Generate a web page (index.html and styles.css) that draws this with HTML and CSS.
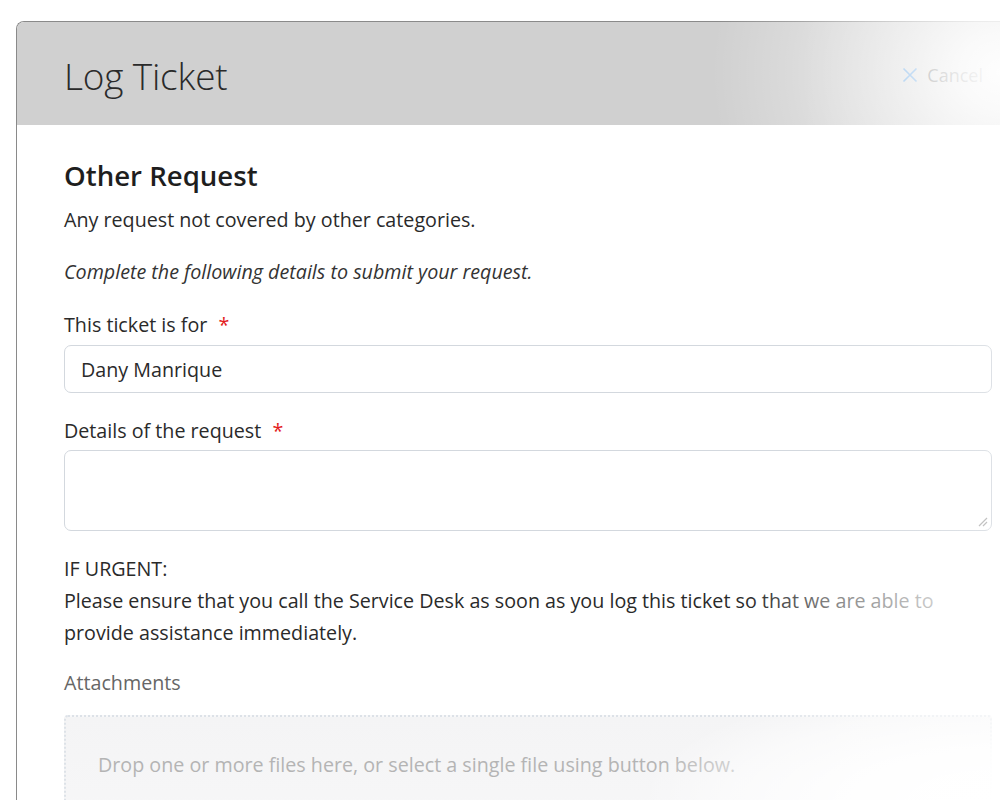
FILE: index.html
```html
<!DOCTYPE html>
<html lang="en">
<head>
<meta charset="utf-8">
<title>Log Ticket</title>
<link rel="stylesheet" href="styles.css">
</head>
<body>
<div class="page">
  <div class="modal">
    <div class="modal-header">
      <h1 class="modal-title">Log Ticket</h1>
      <button class="cancel" type="button">
        <svg class="cancel-icon" width="16" height="16" viewBox="0 0 16 16"><path d="M1.5 1.5 L14.5 14.5 M14.5 1.5 L1.5 14.5" stroke="currentColor" stroke-width="1.6" fill="none"/></svg>
        <span>Cancel</span>
      </button>
    </div>
    <div class="modal-body">
      <h2 class="req-title">Other Request</h2>
      <p class="req-desc">Any request not covered by other categories.</p>
      <p class="req-hint">Complete the following details to submit your request.</p>
      <div class="field">
        <label class="label">This ticket is for <span class="req">*</span></label>
        <div class="input">Dany Manrique</div>
      </div>
      <div class="field">
        <label class="label">Details of the request <span class="req">*</span></label>
        <div class="textarea">
          <svg class="grip" width="12" height="12" viewBox="0 0 12 12"><path d="M11 3 L3 11 M11 7 L7 11" stroke="#b0b0b0" stroke-width="1.2"/></svg>
        </div>
      </div>
      <p class="urgent">IF URGENT:<br>Please ensure that you call the Service Desk as soon as you log this ticket so that we are able to provide assistance immediately.</p>
      <div class="attach">
        <div class="attach-label">Attachments</div>
        <div class="dropzone">Drop one or more files here, or select a single file using button below.</div>
      </div>
    </div>
  </div>
  <div class="fade"></div>
</div>
</body>
</html>
```
FILE: styles.css
```css
html, body {
  margin: 0;
  padding: 0;
  background: #fff;
  overflow: hidden;
}
body {
  font-family: "Open Sans", "Noto Sans", sans-serif;
  color: #252525;
}
.page {
  position: relative;
  width: 1000px;
  height: 800px;
  padding: 21px 0 0 16px;
  box-sizing: border-box;
  overflow: hidden;
}
.modal {
  border-left: 1px solid #8a8a8a;
  border-top: 1px solid #8a8a8a;
  border-top-left-radius: 8px;
  width: 1100px;
  height: 900px;
  background: #fff;
  overflow: hidden;
}
.modal-header {
  background: #d0d0d0;
  height: 103px;
  display: flex;
  align-items: center;
  padding: 0 0 0 47px;
  width: 937px;
  box-sizing: content-box;
}
.modal-title {
  margin: 0;
  font-weight: 300;
  font-size: 37px;
  color: #2a2a2a;
  flex: 1;
  letter-spacing: -0.2px;
  position: relative;
  top: 2px;
}
.cancel {
  display: flex;
  align-items: center;
  gap: 9px;
  border: 0;
  background: none;
  font-family: inherit;
  font-size: 18px;
  color: #333;
  padding: 0;
  margin-right: 18px;
  position: relative;
  top: 1px;
}
.cancel-icon {
  color: #2f86db;
}
.modal-body {
  padding: 30px 0 0 47px;
  width: 928px;
}
.req-title {
  margin: 0;
  font-size: 27.6px;
  font-weight: 600;
  color: #1e1e1e;
  line-height: 40px;
}
.req-desc {
  margin: 11px 0 0;
  font-size: 19.7px;
  line-height: 28px;
  color: #2a2a2a;
}
.req-hint {
  margin: 24px 0 0;
  font-size: 19.7px;
  line-height: 28px;
  font-style: italic;
  color: #333;
}
.field {
  margin-top: 25px;
}
.label {
  display: block;
  font-size: 19.7px;
  line-height: 28px;
  color: #2a2a2a;
}
.req {
  color: #e31b1b;
  margin-left: 6px;
}
.input {
  margin-top: 6px;
  height: 46px;
  border: 1px solid #d3d8de;
  border-radius: 7px;
  padding: 0 16px;
  display: flex;
  align-items: center;
  font-size: 19.7px;
  color: #2a2a2a;
}
.field + .field {
  margin-top: 24px;
}
.textarea {
  margin-top: 5px;
  height: 79px;
  border: 1px solid #d3d8de;
  border-radius: 7px;
  display: flex;
  justify-content: flex-end;
  align-items: flex-end;
}
.grip {
  margin: 0 3px 3px 0;
}
.urgent {
  margin: 22px 0 0;
  font-size: 19.7px;
  line-height: 32px;
  color: #2a2a2a;
}
.attach {
  margin-top: 20px;
}
.attach-label {
  font-size: 19.7px;
  line-height: 28px;
  color: #666;
}
.dropzone {
  margin-top: 18px;
  border: 2px dotted #dde2e8;
  border-radius: 4px;
  background: linear-gradient(to bottom, #f4f4f5, #f8f8f9);
  height: 120px;
  padding: 34px 32px 0;
  font-size: 19.7px;
  color: #b4b4b4;
}
.fade {
  position: absolute;
  inset: 0;
  pointer-events: none;
  background:
    radial-gradient(ellipse 380px 340px at 100% 72px, rgba(255,255,255,0.97) 0%, rgba(255,255,255,0.86) 11%, rgba(255,255,255,0.6) 28%, rgba(255,255,255,0.22) 55%, rgba(255,255,255,0) 76%),
    radial-gradient(ellipse 300px 62px at 100% 600px, rgba(255,255,255,0.9) 0%, rgba(255,255,255,0.74) 20%, rgba(255,255,255,0.6) 33%, rgba(255,255,255,0.4) 57%, rgba(255,255,255,0) 85%),
    radial-gradient(ellipse 360px 120px at 100% 800px, rgba(255,255,255,1) 0%, rgba(255,255,255,0.9) 40%, rgba(255,255,255,0.5) 75%, rgba(255,255,255,0) 100%),
    linear-gradient(to right, rgba(255,255,255,0) 80%, rgba(255,255,255,0.25) 100%);
}
```
